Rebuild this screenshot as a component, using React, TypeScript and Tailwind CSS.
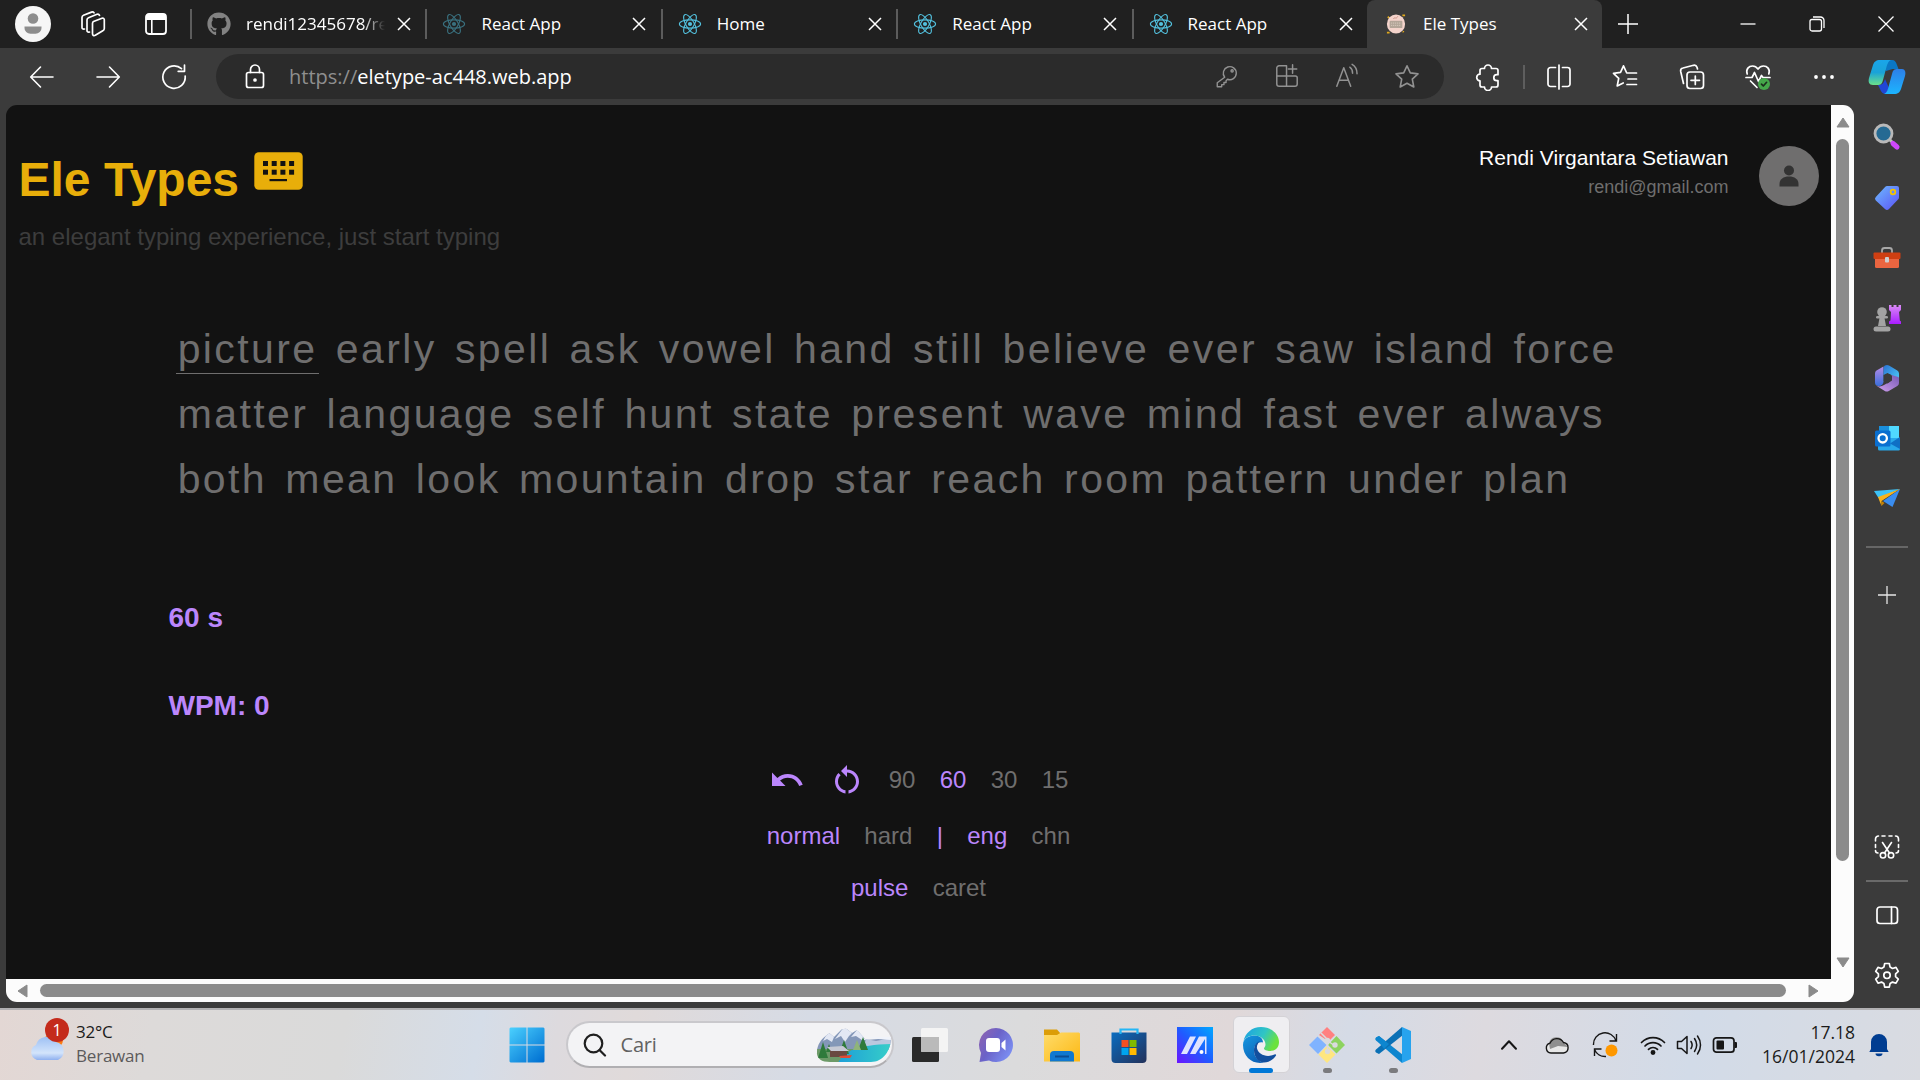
import React from "react";
import { FaGithub } from "react-icons/fa";
import { MdUndo, MdRestartAlt } from "react-icons/md";

const UI = "font-['Open_Sans','Noto_Sans',sans-serif]";

type IconProps = {
  size?: number;
  color?: string;
  sw?: number;
  className?: string;
  children: React.ReactNode;
};

function Line({ size = 28, color = "#fff", sw = 1.5, className = "", children }: IconProps) {
  return (
    <svg
      width={size}
      height={size}
      viewBox="0 0 28 28"
      fill="none"
      stroke={color}
      strokeWidth={sw}
      strokeLinecap="round"
      strokeLinejoin="round"
      className={`shrink-0 ${className}`}
    >
      {children}
    </svg>
  );
}

function ReactLogo({ dim }: { dim?: boolean }) {
  return (
    <svg width="24" height="24" viewBox="-12 -12 24 24" className={dim ? "opacity-50" : ""}>
      <g fill="none" stroke="#53c1de" strokeWidth="1.1">
        <ellipse rx="10.6" ry="4.1" />
        <ellipse rx="10.6" ry="4.1" transform="rotate(60)" />
        <ellipse rx="10.6" ry="4.1" transform="rotate(120)" />
      </g>
      <circle r="2.1" fill="#53c1de" />
    </svg>
  );
}

function EleFavicon() {
  return (
    <svg width="20" height="20" viewBox="0 0 22 22">
      <path d="M1 20.5h3M18 1.500h3M2 3l1.500 1.500M18.500 19l1 1" stroke="#e0a81c" strokeWidth="2" />
      <ellipse cx="11" cy="11" rx="10" ry="10.500" fill="#f4d3cb" />
      <rect x="4" y="7.500" width="14" height="8" rx="1" fill="#b3a598" />
      <path d="M5.500 10h11M5.500 12.500h11" stroke="#d8ccbf" strokeWidth="1" strokeDasharray="1.4 .8" />
      <path d="M8 5.500c2-3 3 1 5-3" stroke="#c98c80" fill="none" />
    </svg>
  );
}

function Close() {
  return (
    <svg width="14" height="14" viewBox="0 0 14 14" stroke="#fff" strokeWidth="1.5">
      <path d="M1 1l12 12M13 1L1 13" />
    </svg>
  );
}

function Tab({ icon, title, divider = true, fade = false }: { icon: React.ReactNode; title: string; divider?: boolean; fade?: boolean }) {
  return (
    <div className="flex h-12 w-[235.4px] shrink-0 items-center">
      <div className={divider ? "h-[30px] w-[2px] bg-[#5c5c5c]" : "h-[30px] w-[2px]"} />
      <div className="ml-[15px] flex w-6 justify-center">{icon}</div>
      <div
        className={
          fade
            ? "ml-[15px] w-[139px] overflow-hidden whitespace-nowrap text-[17px] text-white [mask-image:linear-gradient(to_right,#000_84%,transparent_100%)]"
            : "ml-[15px] w-[139px] overflow-hidden whitespace-nowrap text-[17px] text-white"
        }
      >
        {title}
      </div>
      <div className="ml-[12px]">
        <Close />
      </div>
    </div>
  );
}

function TabStrip() {
  return (
    <div className="flex h-12 items-center bg-[#202020]">
      <div className="ml-[15px] flex h-9 w-9 items-center justify-center rounded-full bg-[#f6f6f6]">
        <svg width="20" height="24" viewBox="0 0 20 24" fill="#8d8d8d">
          <circle cx="10" cy="6.5" r="5.3" />
          <path d="M1.5 14.5h17v1.5a6 5.5 0 0 1-6 5.7h-5a6 5.5 0 0 1-6-5.7z" />
        </svg>
      </div>
      <div className="ml-[27px] flex w-[30px] justify-center">
        <Line size={28} sw={1.7}>
          <path d="M14.500 11.500l8.500-3.300c1.200-.4 2.300.3 2.300 1.600v8.700c0 1-.5 1.800-1.500 2.300l-7.500 4.500c-1.500.8-2.800 0-2.800-1.500V13.500c0-1 .3-1.700 1-2z" />
          <path d="M10.500 22c-1.700.5-2.500-.3-2.500-1.500V10c0-1 .5-1.800 1.500-2.200l8.500-3.500c1-.4 2 0 2.500 1" />
          <path d="M5.500 19c-1.700.3-2.500-.3-2.500-1.500V7.500c0-1 .5-1.800 1.500-2.200l8-3.200c1-.4 2 0 2.500.7" />
        </Line>
      </div>
      <div className="ml-[36px] flex w-6 justify-center">
        <svg width="22" height="22" viewBox="0 0 22 22">
          <rect x="1" y="1" width="20" height="20" rx="3" fill="none" stroke="#fff" strokeWidth="1.8" />
          <path d="M1 4a3 3 0 0 1 3-3h14a3 3 0 0 1 3 3v3H1zM6 6h1.600v15H6z" fill="#fff" />
        </svg>
      </div>
      <div className="ml-[22px] flex">
        <Tab icon={<FaGithub size={24} color="#828282" />} title="rendi12345678/re" fade />
        <Tab icon={<ReactLogo dim />} title="React App" />
        <Tab icon={<ReactLogo />} title="Home" />
        <Tab icon={<ReactLogo />} title="React App" />
        <Tab icon={<ReactLogo />} title="React App" />
        <div className="w-[235.4px] rounded-t-[8px] bg-[#3b3b3b]">
          <Tab icon={<EleFavicon />} title="Ele Types" divider={false} />
        </div>
      </div>
      <div className="ml-[15px]">
        <svg width="22" height="22" viewBox="0 0 22 22" stroke="#fff" strokeWidth="1.5">
          <path d="M11 1v20M1 11h20" />
        </svg>
      </div>
      <div className="flex flex-1 justify-end">
        <div className="flex w-[69px] items-center justify-center">
          <svg width="16" height="16" viewBox="0 0 16 16" stroke="#fff" strokeWidth="1.300">
            <path d="M0.500 8h15" />
          </svg>
        </div>
        <div className="flex w-[69px] items-center justify-center">
          <svg width="16" height="16" viewBox="0 0 16 16" stroke="#fff" strokeWidth="1.300" fill="none">
            <rect x="1" y="3.500" width="11.500" height="11.500" rx="2" />
            <path d="M4 1h7.500a3.500 3.500 0 0 1 3.500 3.500V12" />
          </svg>
        </div>
        <div className="flex w-[69px] items-center justify-center">
          <svg width="16" height="16" viewBox="0 0 16 16" stroke="#fff" strokeWidth="1.300">
            <path d="M0.500 0.500l15 15M15.500 0.500l-15 15" />
          </svg>
        </div>
      </div>
    </div>
  );
}

const STAR = "M14 2.800l3.300 7.100 7.700 1-5.700 5.300 1.500 7.800L14 20.200 7.200 24l1.500-7.800L3 10.900l7.700-1z";

function Copilot() {
  return (
    <svg width="38" height="36" viewBox="0 0 38 36">
      <defs>
        <linearGradient id="cpA" x1="0" y1="0" x2="0" y2="1">
          <stop offset="0" stopColor="#1aa5ea" />
          <stop offset=".5" stopColor="#1aa3d8" />
          <stop offset="1" stopColor="#6be08a" />
        </linearGradient>
        <linearGradient id="cpB" x1="0" y1="0" x2="0" y2="1">
          <stop offset="0" stopColor="#2d7fe8" />
          <stop offset="1" stopColor="#1cb5ff" />
        </linearGradient>
      </defs>
      <path d="M12 1h12c3 0 4 2 5 5l1.500 4h-6L18 12z" fill="#0b77c4" />
      <path d="M10 26c5 0 6-3 7-6l4 9-3 6c-3 0-5-2-6-5z" fill="#2146d6" />
      <path d="M12 1h11c-3 1-4 5-5 9l-3 11c-1 4-2 5-6 5H5c-4 0-5-3-4-7L5 6c1-3 3-5 7-5z" fill="url(#cpA)" />
      <path d="M26 35H16c3-1 4-5 5-9l3-11c1-4 2-5 6-5h4c3 0 4 3 3 7l-4 13c-1 3-3 5-7 5z" fill="url(#cpB)" />
    </svg>
  );
}

function Toolbar() {
  return (
    <div className="flex h-[57px] items-center bg-[#3b3b3b]">
      <div className="ml-[9px] flex">
        <div className="flex w-[66px] justify-center">
          <Line size={28} sw={1.600}>
            <path d="M25 14H3M12.500 4L2.700 14l9.800 10" />
          </Line>
        </div>
        <div className="flex w-[66px] justify-center">
          <Line size={28} sw={1.600}>
            <path d="M3 14h22M15.500 4l9.800 10-9.800 10" />
          </Line>
        </div>
        <div className="flex w-[66px] justify-center">
          <Line size={28} sw={1.700}>
            <path d="M25.200 13A11.200 11.200 0 1 1 21.500 5.700M24.500 2v6.300h-6.300" />
          </Line>
        </div>
      </div>
      <div className="ml-[9px] flex h-[45px] w-[1228px] items-center rounded-full bg-[#2b2b2b]">
        <div className="ml-[24px] flex w-[30px] justify-center">
          <Line size={28} sw={1.700}>
            <rect x="5.500" y="9.500" width="17" height="15" rx="2" />
            <path d="M9.500 9.500V6.500a4.500 4.500 0 0 1 9 0v3" />
            <circle cx="14" cy="17" r="1" fill="#fff" />
          </Line>
        </div>
        <div className="ml-[19px] flex-1 whitespace-nowrap text-[20px] leading-[26px] text-[#8f8f8f]">
          https://<span className="text-white">eletype-ac448.web.app</span>
        </div>
        <div className="mr-[7px] flex">
          <div className="flex w-[60px] justify-center">
            <Line size={26} color="#929292">
              <path d="M11.500 15.300a7 7 0 1 1 3 2.200l-1.500 1.500v2h-2.300v2.300H8.300v2.200H3.500v-4.200z" />
              <circle cx="19.500" cy="8.500" r="1.200" />
            </Line>
          </div>
          <div className="flex w-[60px] justify-center">
            <Line size={26} color="#929292" sw={1.600}>
              <path d="M13.500 3h-8A2.500 2.500 0 0 0 3 5.500v17A2.500 2.500 0 0 0 5.500 25h17a2.500 2.500 0 0 0 2.500-2.500V16a2 2 0 0 0-2-2H3M13.500 3v22M20 2v9M15.500 6.500h9" />
            </Line>
          </div>
          <div className="flex w-[60px] justify-center">
            <Line size={26} color="#929292" sw={1.600}>
              <path d="M3 25L10.500 5 18 25M5.500 18.500h10M17 4.500c2 1.300 3 3.500 3 6.500M19.500 1.500c3.500 2 5.300 5.500 5.300 10" />
            </Line>
          </div>
          <div className="flex w-[60px] justify-center">
            <Line size={28} color="#929292" sw={1.600}>
              <path d={STAR} />
            </Line>
          </div>
        </div>
      </div>
      <div className="ml-[16px] flex w-[56px] justify-center">
        <Line size={28} sw={1.700}>
          <path d="M10.500 5.500a3.500 3.500 0 0 1 7 0H22a2 2 0 0 1 2 2v4.200h-1.200a3 3 0 0 0 0 6H24v4.300a2 2 0 0 1-2 2h-4.500a3.500 3.500 0 0 1-7 0H8a2 2 0 0 1-2-2v-4.200a3.300 3.300 0 0 1 0-6.600V7.500a2 2 0 0 1 2-2z" />
        </Line>
      </div>
      <div className="ml-[7px] h-6 w-[2px] bg-[#5e5e5e]" />
      <div className="ml-[1px] flex items-center">
        <div className="flex w-[66px] justify-center">
          <Line size={28} sw={1.700}>
            <path d="M14 2v24M10.500 4.500h-5A2.500 2.500 0 0 0 3 7v14a2.500 2.500 0 0 0 2.500 2.500h5M17.500 4.500h5A2.500 2.500 0 0 1 25 7v14a2.500 2.500 0 0 1-2.500 2.500h-5" />
          </Line>
        </div>
        <div className="flex w-[66px] justify-center">
          <Line size={28} sw={1.700}>
            <path d="M15.500 9.500L12.500 2.800 9.500 9.300l-7 1 5.200 5-1.500 7.700 6-3M16 10h9.500M17 16h8.500M16 21.500h9.500" />
          </Line>
        </div>
        <div className="flex w-[67px] justify-center">
          <Line size={28} sw={1.700}>
            <rect x="9" y="9" width="16.500" height="16.500" rx="3" />
            <path d="M17.300 13v8.500M13 17.300h8.500M5.500 20.500L2.700 8.500A3 3 0 0 1 5 5l10.500-2.700a3 3 0 0 1 3.500 2l.5 1.700" />
          </Line>
        </div>
        <div className="flex w-[66px] justify-center">
          <Line size={28} sw={1.700}>
            <path d="M3.200 11C1.500 6 5 3 8.500 3c2.500 0 4.300 1.300 5.500 3 1.200-1.700 3-3 5.500-3 3.500 0 7 3 5.300 8M2 14.500h6l2.500-5 4 9 3-6 1.500 2h7M6.500 18l6.500 6.500" />
            <circle cx="20" cy="21" r="6" fill="#45a84a" stroke="none" />
            <path d="M17.500 21.200l1.800 1.800 3.300-3.700" stroke="#1c2f1d" />
          </Line>
        </div>
        <div className="flex w-[66px] justify-center">
          <svg width="22" height="6" viewBox="0 0 22 6" fill="#fff">
            <circle cx="3" cy="3" r="1.900" />
            <circle cx="11" cy="3" r="1.900" />
            <circle cx="19" cy="3" r="1.900" />
          </svg>
        </div>
      </div>
      <div className="ml-[11px]">
        <Copilot />
      </div>
    </div>
  );
}

const LINES = [
  "picture early spell ask vowel hand still believe ever saw island force",
  "matter language self hunt state present wave mind fast ever always",
  "both mean look mountain drop star reach room pattern under plan",
];

function KeyboardIcon() {
  const xs = [9, 17.700, 26.400, 35.100];
  return (
    <svg width="49" height="38" viewBox="0 0 49 38">
      <rect x="0.300" y="0.300" width="48.400" height="37.400" rx="4.500" fill="#e8ae0a" />
      <g fill="#121212">
        {xs.map((x) => (
          <rect key={x} x={x} y="9" width="5" height="5" />
        ))}
        {xs.map((x) => (
          <rect key={x} x={x} y="17.700" width="5" height="5" />
        ))}
        <rect x="15.500" y="27" width="17.500" height="2.200" />
      </g>
    </svg>
  );
}

function Page() {
  return (
    <div className="flex h-[874px] w-[1825px] flex-col bg-[#121212] font-['Liberation_Sans',Arial,sans-serif]">
      <div className="flex h-[150px] justify-between">
        <div className="pl-[12.500px]">
          <div className="flex pt-[47px]">
            <h1 className="w-[235.500px] whitespace-nowrap text-[48px] leading-[56px] font-bold text-[#e8ae0a]">Ele Types</h1>
            <KeyboardIcon />
          </div>
          <div className="mt-[15px] whitespace-nowrap text-[24px] leading-[28px] text-[#3d3d3d]">
            an elegant typing experience, just start typing
          </div>
        </div>
        <div className="flex pt-[41px] pr-[12px]">
          <div className="mr-[30.500px] text-right">
            <div className="text-[21px] leading-[24px] text-white">Rendi Virgantara Setiawan</div>
            <div className="mt-[6px] text-[18px] leading-[22px] text-[#6f6e6e]">rendi@gmail.com</div>
          </div>
          <div className="flex h-[60px] w-[60px] items-center justify-center rounded-full bg-[#6f6e6e]">
            <svg width="20" height="22" viewBox="0 0 20 22" fill="#333">
              <circle cx="10" cy="5.500" r="5" />
              <path d="M0.500 21.500v-2.500c0-5 4-7.500 9.500-7.500s9.500 2.500 9.500 7.500v2.500z" />
            </svg>
          </div>
        </div>
      </div>
      <div className="mt-[61px] pl-[162.500px]">
        {LINES.map((line, i) => (
          <div key={i} className="flex h-[65px] items-start pt-[4.500px]">
            {line.split(" ").map((w, j) => (
              <span
                key={j}
                className={
                  i === 0 && j === 0
                    ? "mx-[7.750px] h-[53px] border-b-[1.500px] border-[#6f6e6e] px-[1.400px] text-[41px] leading-[57px] tracking-[2.400px] text-[#6f6e6e]"
                    : "mx-[7.750px] px-[1.400px] text-[41px] leading-[57px] tracking-[2.400px] text-[#6f6e6e]"
                }
              >
                {w}
              </span>
            ))}
          </div>
        ))}
      </div>
      <div className="mt-[91px] pl-[162.500px] text-[28px] leading-[32px] font-bold text-[#bb86fc]">
        <div>60 s</div>
        <div className="mt-[56px]">WPM: 0</div>
      </div>
      <div className="mt-[34.500px] flex flex-col items-center text-[24px] leading-[28px] text-[#bb86fc]">
        <div className="flex h-[46px] items-center">
          <MdUndo size={36} className="mr-[24px]" />
          <MdRestartAlt size={36} className="mr-[24px]" />
          <div className="flex gap-[24.300px] text-[#6f6e6e]">
            <span>90</span>
            <span className="text-[#bb86fc]">60</span>
            <span>30</span>
            <span>15</span>
          </div>
        </div>
        <div className="mt-[19.500px] flex gap-[24.300px]">
          <span>normal</span>
          <span className="text-[#6f6e6e]">hard</span>
          <span>|</span>
          <span>eng</span>
          <span className="text-[#6f6e6e]">chn</span>
        </div>
        <div className="mt-[24px] flex gap-[24.300px]">
          <span>pulse</span>
          <span className="text-[#6f6e6e]">caret</span>
        </div>
      </div>
    </div>
  );
}

function VScroll() {
  return (
    <div className="flex h-full w-[23px] flex-col items-center bg-[#fcfcfc]">
      <svg width="14" height="11" viewBox="0 0 14 11" className="mt-[12px]">
        <path d="M7 1l6 9H1z" fill="#8b8b8b" stroke="#8b8b8b" strokeLinejoin="round" />
      </svg>
      <div className="mt-[11px] h-[722px] w-[13px] rounded-full bg-[#8b8b8b]" />
      <svg width="14" height="11" viewBox="0 0 14 11" className="mt-[96px]">
        <path d="M7 10l6-9H1z" fill="#8b8b8b" stroke="#8b8b8b" strokeLinejoin="round" />
      </svg>
    </div>
  );
}

function HScroll() {
  return (
    <div className="flex h-[23px] w-full items-center bg-[#fcfcfc]">
      <svg width="11" height="14" viewBox="0 0 11 14" className="ml-[11px]">
        <path d="M1 7l9-6v12z" fill="#8b8b8b" stroke="#8b8b8b" strokeLinejoin="round" />
      </svg>
      <div className="ml-[12px] h-[13px] w-[1746px] rounded-full bg-[#8b8b8b]" />
      <svg width="11" height="14" viewBox="0 0 11 14" className="ml-[22px]">
        <path d="M10 7L1 1v12z" fill="#8b8b8b" stroke="#8b8b8b" strokeLinejoin="round" />
      </svg>
    </div>
  );
}

function Sidebar() {
  return (
    <div className="flex w-[66px] flex-col items-center bg-[#3b3b3b] pr-[1px]">
      <div className="mt-[1px] flex h-[61px] items-center">
        <svg width="28" height="28" viewBox="0 0 28 28">
          <path d="M17 17l3 3" stroke="#bdbdbd" strokeWidth="3" />
          <path d="M20 20.500l4 3.500" stroke="#cf48fb" strokeWidth="5" strokeLinecap="round" />
          <circle cx="10.500" cy="10.500" r="8.500" fill="#256a93" stroke="#b9b9b9" strokeWidth="2.800" />
        </svg>
      </div>
      <div className="flex h-[61px] items-center">
        <svg width="28" height="28" viewBox="0 0 28 28">
          <defs>
            <linearGradient id="tag" x1="0" y1="0" x2="1" y2="1">
              <stop offset="0" stopColor="#6dbaff" />
              <stop offset="1" stopColor="#5b52f4" />
            </linearGradient>
          </defs>
          <path d="M14 2h10a2 2 0 0 1 2 2v9a3 3 0 0 1-1 2.500l-9 9.500a3 3 0 0 1-4 0L2.800 16.500a2.500 2.500 0 0 1 0-3.500l9.500-10.200A3 3 0 0 1 14 2z" fill="url(#tag)" />
          <circle cx="20" cy="8" r="2.300" fill="none" stroke="#f4c400" strokeWidth="1.800" />
        </svg>
      </div>
      <div className="flex h-[60px] items-center">
        <svg width="28" height="28" viewBox="0 0 28 28">
          <path d="M9 9V6.500A2.500 2.500 0 0 1 11.500 4h5A2.500 2.500 0 0 1 19 6.500V9" stroke="#a8a8a8" strokeWidth="1.800" fill="none" />
          <rect x="2" y="13" width="24" height="11" rx="1.500" fill="#ea6540" />
          <rect x="0.500" y="8.500" width="27" height="6.500" rx="1" fill="#cf3f12" />
          <rect x="12" y="13" width="4" height="5.500" rx="1" fill="#cfcfcf" />
        </svg>
      </div>
      <div className="flex h-[59px] items-center">
        <svg width="28" height="28" viewBox="0 0 28 28">
          <defs>
            <linearGradient id="rook" x1="0" y1="0" x2="0" y2="1">
              <stop offset="0" stopColor="#d98bf5" />
              <stop offset="1" stopColor="#a91cff" />
            </linearGradient>
          </defs>
          <path d="M16 1h2.500v2h2V1h3v2h2V1H28v5l-2 2 .8 8.500 1.200 1V20H16v-2.500l1.500-1L18 8l-2-2z" fill="url(#rook)" />
          <g fill="#a3a3a3">
            <circle cx="9" cy="8" r="4.800" />
            <rect x="3" y="12" width="12" height="2.600" rx="1.300" />
            <path d="M6.500 14h5l1.500 8H5z" />
            <rect x="0.500" y="22.500" width="17" height="5" rx="2.500" />
          </g>
        </svg>
      </div>
      <div className="flex h-[61px] items-center">
        <svg width="28" height="28" viewBox="0 0 28 28">
          <defs>
            <linearGradient id="m1" x1="0" y1="0" x2="1" y2="1">
              <stop offset="0" stopColor="#2a72d4" />
              <stop offset="1" stopColor="#4fd0f8" />
            </linearGradient>
            <linearGradient id="m2" x1="0" y1="0" x2="0" y2="1">
              <stop offset="0" stopColor="#b78be6" />
              <stop offset="1" stopColor="#3a6fdb" />
            </linearGradient>
            <linearGradient id="m3" x1="0" y1="1" x2="1" y2="0">
              <stop offset="0" stopColor="#d3a1ee" />
              <stop offset="1" stopColor="#7659b5" />
            </linearGradient>
          </defs>
          <path d="M10.500 2.500L3.500 6.500A3.500 3.500 0 0 0 2 9.500v9a3.500 3.500 0 0 0 3 3.500c3 .5 5.500-1.500 5.500-4.500z" fill="url(#m2)" />
          <path d="M12 1.500a4 4 0 0 1 4 0l8.300 5A3.500 3.500 0 0 1 26 9.500v7.500l-8-6.300c-2-1.500-4.500-1-6.500.5l-1 7V4.500c0-1.500.5-2.500 1.500-3z" fill="url(#m1)" />
          <path d="M26 14v5a3.500 3.500 0 0 1-1.700 3l-8.500 5a4 4 0 0 1-4 0L3 21.500c3 1.500 5.500 1 8-.5l4.500-2.500c2-1 3-3 3-5V11l5 1.500c1.500.3 2.500.5 2.500 1.500z" fill="url(#m3)" />
          <path d="M10.500 11l4-2 4.500 3v4.500l-4.500 3-4-2.500z" fill="#3b3b3b" />
        </svg>
      </div>
      <div className="flex h-[60px] items-center">
        <svg width="28" height="28" viewBox="0 0 28 28">
          <rect x="6" y="2" width="20" height="14" fill="#1a8fdc" />
          <rect x="16" y="2" width="10" height="12" fill="#50d9ff" />
          <path d="M5 14h22v11a1.500 1.500 0 0 1-1.500 1.500h-19A1.500 1.500 0 0 1 5 25z" fill="#28a8ea" />
          <path d="M27 13v12l-10-5.500z" fill="#0f6fc5" />
          <rect x="2" y="6.500" width="15.500" height="16" rx="1.500" fill="#0a6fd0" />
          <circle cx="9.700" cy="14.300" r="4.200" fill="none" stroke="#fff" strokeWidth="2.300" />
        </svg>
      </div>
      <div className="flex h-[59px] items-center">
        <svg width="28" height="28" viewBox="0 0 28 28">
          <path d="M27 5L1 7l4.500 7z" fill="#3cc2f7" />
          <path d="M27 5L10 17l9.500 6z" fill="#3a8df0" />
          <path d="M27 5L5 13l3.500 9V17z" fill="#f9b31b" />
          <path d="M8.500 22V17l3 2z" fill="#c98300" />
        </svg>
      </div>
      <div className="mt-[19px] h-[2px] w-[42px] bg-[#666]" />
      <svg width="18" height="18" viewBox="0 0 18 18" stroke="#e6e6e6" strokeWidth="1.300" className="mt-[38px] shrink-0">
        <path d="M9 0v18M0 9h18" />
      </svg>
      <Line size={28} sw={1.600} className="mt-[229px]">
        <path d="M2.500 8V6A3 3 0 0 1 5.500 3M9 3h3M16 3h3M22.500 3a3 3 0 0 1 3 3v2M2.500 11.500v3M2.500 17.500c0 1.500 1 2.500 2.500 2.500M25.500 11.500v3M25.500 17.500c0 1.500-1 2.500-2.500 2.500" />
        <path d="M9.500 9.500l7 10.500M18.500 9.500l-7 10.500" />
        <circle cx="10" cy="22.300" r="2.700" />
        <circle cx="18" cy="22.300" r="2.700" />
      </Line>
      <div className="mt-[19px] h-[1.500px] w-[42px] bg-[#6a6a6a]" />
      <Line size={28} sw={1.700} className="mt-[19px]">
        <rect x="4" y="6" width="20.500" height="16.500" rx="3" />
        <path d="M18.500 6v16.500" />
      </Line>
      <Line size={28} sw={1.700} className="mt-[32px]">
        <path d="M11.700 2.500h4.600l.8 3.600 2.400 1.400 3.500-1.100 2.300 4-2.700 2.500v2.800l2.700 2.500-2.300 4-3.500-1.100-2.400 1.400-.8 3.600h-4.600l-.8-3.600-2.400-1.400L5 22.200l-2.300-4 2.700-2.500v-2.800l-2.700-2.500 2.300-4 3.500 1.100 2.400-1.400z" />
        <circle cx="14" cy="14.300" r="3.200" />
      </Line>
    </div>
  );
}

function Landscape() {
  return (
    <svg width="76" height="36" viewBox="0 0 76 36">
      <defs>
        <linearGradient id="lake" x1="0" y1="0" x2="1" y2="0">
          <stop offset="0" stopColor="#1e9fd8" />
          <stop offset="1" stopColor="#36cfc8" />
        </linearGradient>
        <clipPath id="lclip">
          <path d="M1 24C2 12 14 3 28 2c12-1 18 4 22 8h25c0 14-8 25-20 25H14C6 35 0 32 1 24z" />
        </clipPath>
      </defs>
      <g clipPath="url(#lclip)">
        <path d="M0 16L12 5l6 5L28 0l8 6 5-3 9 10 26-2v12H0z" fill="#8497b8" />
        <path d="M12 5l-5 9 4-2 5 3 2-5zM28 0l-9 12 6-3 4 6 4-6 3-3zM41 3l-6 7 5-1 6 4 4 0z" fill="#e3e8f4" />
        <path d="M50 12l10 2 16-3v8H48z" fill="#b9c8df" />
        <path d="M52 10l24 0v3l-14-1z" fill="#f0f3fa" />
        <path d="M0 22h52l2 4-20 10H0z" fill="#6d9a68" />
        <path d="M22 36c6-12 18-18 54-19v19z" fill="url(#lake)" />
        <path d="M7 15l5 16H2zM13 17l3 8h-6zM28 13l5 14H23zM47 10l5 13H42z" fill="#2f7a3b" />
        <path d="M41 13l4 10h-8z" fill="#8fb47a" />
        <path d="M14 22h17v8H14z" fill="#6a4a41" />
        <path d="M11 20l16-1 6 5H15z" fill="#c7c9d4" />
        <path d="M23 29l13-1-2 3H25z" fill="#e04a35" />
      </g>
    </svg>
  );
}

function Taskbar() {
  return (
    <div className={`flex h-[72px] border-t-2 border-[#b1b0b2] bg-[linear-gradient(100deg,#e3d7d4_0%,#dddad9_8%,#dadada_18%,#d5dde8_25%,#dddade_29%,#e0dada_33%,#d6dbe5_42%,#dbdbdc_53%,#e0d8d9_64%,#d5dbe6_70%,#dddadf_77%,#d2dbe8_88%,#d9dbe1_100%)] pb-[1px] ${UI}`}>
      <div className="flex w-[509px] shrink-0 pl-[28px]">
        <div className="relative mt-[8px] h-[52px] w-[42px]">
          <svg width="42" height="52" viewBox="0 0 42 52">
            <defs>
              <linearGradient id="cloud" x1="0" y1="0" x2="0" y2="1">
                <stop offset="0" stopColor="#9dc0f4" />
                <stop offset=".7" stopColor="#d3e4fb" />
                <stop offset="1" stopColor="#8fb0ef" />
              </linearGradient>
            </defs>
            <circle cx="26" cy="22" r="9" fill="#fb7a14" />
            <path d="M9 42a8 8 0 0 1-1-15 11 11 0 0 1 20-3 9.500 9.500 0 0 1 2 18z" fill="url(#cloud)" />
          </svg>
          <div className="absolute top-[0px] left-[17px] flex h-6 w-6 items-center justify-center rounded-full bg-[#c42b1c] text-[16px] text-white">1</div>
        </div>
        <div className="ml-[6px] mt-[10px] text-[17px] leading-[24px] tracking-[-0.200px]">
          <div className="text-[#1b1b1b]">32°C</div>
          <div className="text-[#5c5a5b]">Berawan</div>
        </div>
      </div>
      <div className="flex h-full items-center">
        <svg width="36" height="36" viewBox="0 0 36 36">
          <defs>
            <linearGradient id="win" gradientUnits="userSpaceOnUse" x1="0" y1="0" x2="32" y2="36">
              <stop offset="0" stopColor="#4cd2ff" />
              <stop offset="1" stopColor="#0070d2" />
            </linearGradient>
          </defs>
          <path d="M1.500 0.500h16v17H0.500v-16zM18.500 0.500h16l1 1v16h-17zM0.500 18.500h17v17h-16l-1-1zM18.500 18.500h17v16l-1 1h-16z" fill="url(#win)" />
        </svg>
        <div className="ml-[20.500px] flex h-[47px] w-[328px] items-center rounded-full border-2 border-[#c9c8cc] border-b-[#b0afb2] bg-[#f3f3f5]">
          <svg width="24" height="24" viewBox="0 0 24 24" fill="none" stroke="#1f1f1f" strokeWidth="2.200" strokeLinecap="round" className="ml-[15px]">
            <circle cx="10.500" cy="10.500" r="8.800" />
            <path d="M16.500 17l5.500 5.500" />
          </svg>
          <div className="ml-[14px] flex-1 text-[20px] tracking-[-0.200px] text-[#616161]">Cari</div>
          <Landscape />
        </div>
        <div className="ml-[3.500px] flex h-full items-center">
          <div className="flex w-[66.200px] justify-center">
            <svg width="36" height="36" viewBox="0 0 36 36">
              <rect x="0" y="10" width="27" height="25" rx="1.500" fill="#2a2a2a" />
              <rect x="9" y="1" width="27" height="24" rx="1.500" fill="#f4f4f4" />
              <path d="M9 10h18v15H10.500A1.500 1.500 0 0 1 9 23.500z" fill="#bababa" />
            </svg>
          </div>
          <div className="flex w-[66.200px] justify-center">
            <svg width="36" height="36" viewBox="0 0 36 36">
              <defs>
                <linearGradient id="chat" x1="0" y1="0" x2="1" y2=".6">
                  <stop offset="0" stopColor="#9464ad" />
                  <stop offset=".5" stopColor="#6a62c8" />
                  <stop offset="1" stopColor="#7a8cf0" />
                </linearGradient>
              </defs>
              <path d="M18 1a17 17 0 1 1-7 32.500L1.500 35 3 26A17 17 0 0 1 18 1z" fill="url(#chat)" />
              <rect x="8" y="11" width="14" height="14" rx="3" fill="#fff" />
              <path d="M23.500 16l4-3.500v11l-4-3.500z" fill="#fff" />
            </svg>
          </div>
          <div className="flex w-[66.200px] justify-center">
            <svg width="36" height="36" viewBox="0 0 36 36">
              <defs>
                <linearGradient id="fold" x1="0" y1="0" x2="1" y2="1">
                  <stop offset="0" stopColor="#ffdc6a" />
                  <stop offset="1" stopColor="#fcb814" />
                </linearGradient>
              </defs>
              <path d="M0 2.500h13l3.500 4H34v8H0z" fill="#dc9d07" />
              <path d="M0 8h13l4-2.500h18l1 1V34.500H0z" fill="url(#fold)" />
              <path d="M6 34.500V28a4 4 0 0 1 4-4h16a4 4 0 0 1 4 4v6.500z" fill="#0f78d0" />
              <path d="M11 29.500h14" stroke="#0a4d94" strokeWidth="2" />
            </svg>
          </div>
          <div className="flex w-[66.200px] justify-center">
            <svg width="36" height="36" viewBox="0 0 36 36">
              <defs>
                <linearGradient id="store" x1="0" y1="0" x2="1" y2="1">
                  <stop offset="0" stopColor="#0a6cc0" />
                  <stop offset="1" stopColor="#23315a" />
                </linearGradient>
              </defs>
              <path d="M.5 5.500h35V32a4 4 0 0 1-4 4h-27a4 4 0 0 1-4-4z" fill="url(#store)" />
              <path d="M9.500 7V2.500h17V7" stroke="#24b6f5" strokeWidth="2.200" fill="none" />
              <path d="M10.500 13h7v7h-7z" fill="#f25022" />
              <path d="M18.500 13h7v7h-7z" fill="#7fba00" />
              <path d="M10.500 21h7v7h-7z" fill="#00a4ef" />
              <path d="M18.500 21h7v7h-7z" fill="#ffb900" />
            </svg>
          </div>
          <div className="flex w-[66.200px] justify-center">
            <svg width="36" height="36" viewBox="0 0 36 36">
              <defs>
                <linearGradient id="asus" x1="0" y1="1" x2="1" y2="0">
                  <stop offset="0" stopColor="#6b14ff" />
                  <stop offset=".5" stopColor="#1f5cff" />
                  <stop offset="1" stopColor="#00a8ff" />
                </linearGradient>
              </defs>
              <rect width="36" height="36" fill="url(#asus)" />
              <path d="M4 27L13 9.500h6L10 27zM13 27l9-17.500h7.500V27h-1.500V12L18.500 27z" fill="#dfe3ff" />
              <circle cx="24.500" cy="25" r="2" fill="#fff" />
            </svg>
          </div>
          <div className="relative mx-[4.600px] flex h-[57px] w-[57px] items-center justify-center rounded-[6px] border border-[#d4d2d6] bg-[#efeef1]">
            <svg width="36" height="36" viewBox="0 0 36 36">
              <defs>
                <linearGradient id="e1" x1="0" y1="0" x2="1" y2=".4">
                  <stop offset="0" stopColor="#1a9fe6" />
                  <stop offset=".6" stopColor="#30c5c4" />
                  <stop offset="1" stopColor="#6be23e" />
                </linearGradient>
                <linearGradient id="e2" x1="0" y1="0" x2=".6" y2="1">
                  <stop offset="0" stopColor="#1597e0" />
                  <stop offset="1" stopColor="#0c63b8" />
                </linearGradient>
              </defs>
              <path d="M0 18C0 10 8 8.500 12 8.500c6 0 8 4 8 7-5-1-9 2-9 8 0 7 5 11 10 12C10 38 0 30 0 18z" fill="url(#e2)" />
              <path d="M17 14c-3 1-6 4-6 9.500 0 7 5 12 10 12 6 0 10-4 12-7 .4-1-.5-1.500-1.500-1-8 3.500-16 0-17.500-6-.5-3 1-5.500 3-7.500z" fill="#124f9e" />
              <path d="M.3 15C2 6 9 0 18 0c10 0 18 7 18 15 0 6-4 9-9 9-3 0-6-1-6-2.500 0-1 1.500-1.500 1.500-4 0-5-5-9-11-9C6 8.500 1.500 11 .3 15z" fill="url(#e1)" />
            </svg>
            <div className="absolute bottom-[-1px] left-[15px] h-[5px] w-6 rounded-full bg-[#0078d7]" />
          </div>
          <div className="relative flex h-full w-[66.200px] items-center justify-center">
            <svg width="36" height="36" viewBox="0 0 36 36">
              <path d="M18 0l8 8-8 8-2-4-6-4z" fill="#ff8080" />
              <path d="M8.500 9.500l9 8.500-8.500 9L0 18z" fill="#80b3ff" />
              <path d="M27.500 9l8.500 9-8.500 8.500L19 18z" fill="#8dd35f" />
              <path d="M18 19l8.500 8.500L18 36l-8.500-8.500z" fill="#ffe680" />
              <path d="M12 6l6.500 6.500v14M19 14l7 5" stroke="#dadadd" strokeWidth="1.500" fill="none" />
              <circle cx="18.500" cy="13.500" r="2.700" fill="#dadadd" />
              <circle cx="26" cy="18" r="2.700" fill="#dadadd" />
              <circle cx="18.500" cy="24.500" r="2.700" fill="#dadadd" />
            </svg>
            <div className="absolute bottom-[6px] left-[29px] h-[5px] w-[9px] rounded-full bg-[#7b7b7e]" />
          </div>
          <div className="relative flex h-full w-[66.200px] items-center justify-center">
            <svg width="36" height="36" viewBox="0 0 36 36">
              <path d="M1 10.500L4 9l24 19-1 8L1 13.500c-1-1-1-2 0-3z" fill="#0d86cf" />
              <path d="M1 25.500L4 27 28 8l-1-8L1 22.500c-1 1-1 2 0 3z" fill="#0a70b5" />
              <path d="M1 10.500L4 9l10 8-5 5z" fill="#0d86cf" />
              <path d="M27 0l9 4v28l-9 4z" fill="#27a3ee" />
            </svg>
            <div className="absolute bottom-[6px] left-[29px] h-[5px] w-[9px] rounded-full bg-[#7b7b7e]" />
          </div>
        </div>
      </div>
      <div className="flex flex-1 items-center justify-end">
        <Line size={26} color="#161616" sw={2.200}>
          <path d="M6.500 18l7.500-8 7.500 8" />
        </Line>
        <svg width="26" height="26" viewBox="0 0 26 26" className="ml-[22px]">
          <path d="M7 21a5 5 0 0 1-1-9.800 7.500 7.500 0 0 1 13.500-.7A5.300 5.300 0 0 1 19.500 21z" fill="#e7e7e7" />
          <path d="M5 11.500a7.500 7.500 0 0 1 14.500-1L24 15l-10-1-8 3z" fill="#8e8e8e" />
          <path d="M7 21a5 5 0 0 1-1-9.800 7.500 7.500 0 0 1 13.500-.7A5.300 5.300 0 0 1 19.500 21z" fill="none" stroke="#161616" strokeWidth="1.400" />
        </svg>
        <svg width="26" height="26" viewBox="0 0 26 26" fill="none" stroke="#161616" strokeWidth="1.400" className="ml-[22px]">
          <path d="M1.500 13A11.500 11.500 0 0 1 24 9M24.500 2v7h-7M2.500 24v-7h7M2.500 17.500A11.500 11.500 0 0 0 14 24.500" />
          <circle cx="19.500" cy="18.500" r="6" fill="#ff9800" stroke="none" />
        </svg>
        <svg width="26" height="24" viewBox="0 0 26 24" fill="none" stroke="#161616" strokeWidth="1.700" strokeLinecap="round" className="ml-[22px]">
          <path d="M1.500 9.500a16 16 0 0 1 23 0M5 13a11 11 0 0 1 16 0M8.500 16.300a6.500 6.500 0 0 1 9 0" />
          <circle cx="13" cy="19.500" r="1.600" fill="#161616" />
        </svg>
        <svg width="26" height="24" viewBox="0 0 26 24" fill="none" stroke="#161616" strokeWidth="1.500" strokeLinecap="round" strokeLinejoin="round" className="ml-[10px]">
          <path d="M1.500 8.500h4l5.500-5v17l-5.500-5h-4zM15 8.500c1.300 2 1.300 5 0 7M18.500 5.500c2.700 4 2.700 9 0 13M21.500 3c4 5.500 4 12.500 0 18" />
        </svg>
        <svg width="26" height="18" viewBox="0 0 26 18" className="ml-[10px]">
          <rect x="1.500" y="1.800" width="20.500" height="14.400" rx="3" fill="none" stroke="#161616" strokeWidth="1.700" />
          <rect x="4.500" y="4.500" width="7.500" height="9" rx="1" fill="#161616" />
          <path d="M22.500 6h1.500a1 1 0 0 1 1 1v4a1 1 0 0 1-1 1h-1.500z" fill="#161616" />
        </svg>
        <div className="ml-[10px] w-[107px] pb-[2px] text-right text-[17.500px] leading-[24px] text-[#1b1b1b]">
          <div>17.18</div>
          <div>16/01/2024</div>
        </div>
        <svg width="20" height="24" viewBox="0 0 20 24" className="mr-[31px] ml-[14px]" fill="#003d91">
          <path d="M10 1a8 8 0 0 1 8 8v7l1.700 3H.3L2 16V9a8 8 0 0 1 8-8zM6.500 20.500h7a3.500 2.800 0 0 1-7 0z" />
        </svg>
      </div>
    </div>
  );
}

export default function App() {
  return (
    <div className={`flex h-[1080px] w-[1920px] flex-col overflow-hidden bg-[#3b3b3b] ${UI}`}>
      <TabStrip />
      <Toolbar />
      <div className="flex h-[903px] shrink-0">
        <div className="ml-[6px] h-[897px] w-[1848px] overflow-hidden rounded-[11px]">
          <div className="flex h-[874px]">
            <Page />
            <VScroll />
          </div>
          <HScroll />
        </div>
        <Sidebar />
      </div>
      <Taskbar />
    </div>
  );
}
